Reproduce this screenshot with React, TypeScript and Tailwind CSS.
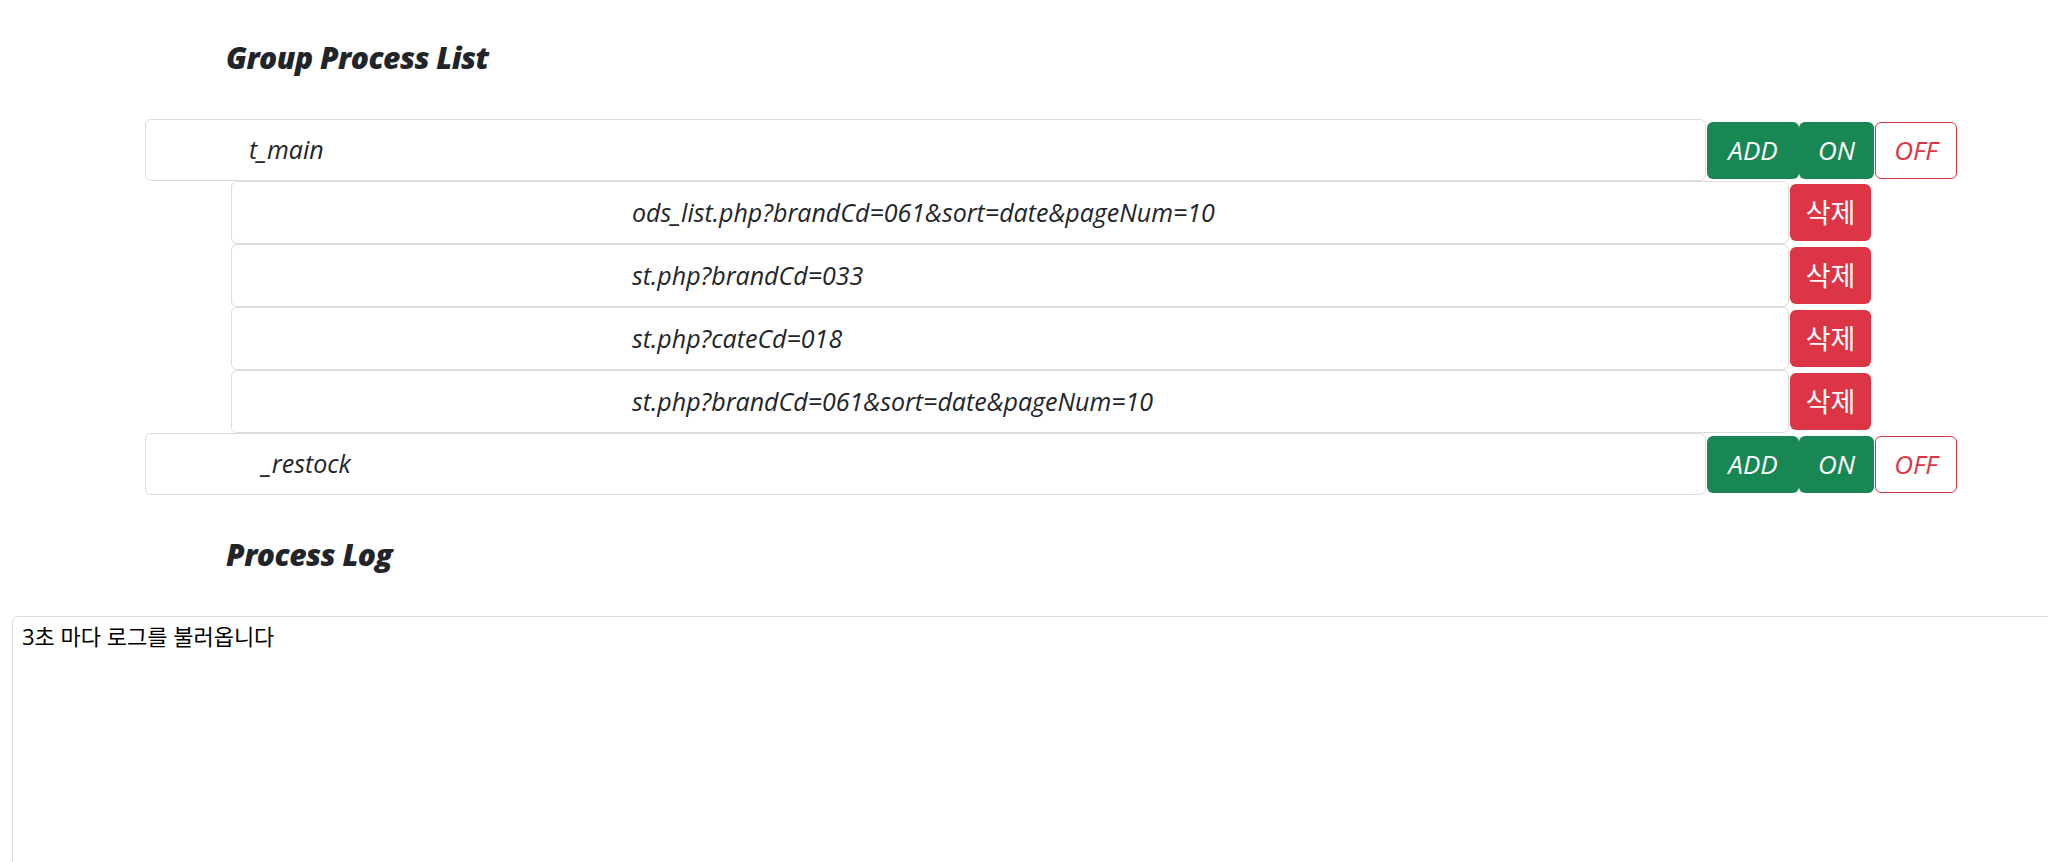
import React from "react";

const groups = [
  {
    name: "t_main",
    pad: "pl-[103px]",
    items: [
      "ods_list.php?brandCd=061&sort=date&pageNum=10",
      "st.php?brandCd=033",
      "st.php?cateCd=018",
      "st.php?brandCd=061&sort=date&pageNum=10",
    ],
  },
  { name: "_restock", pad: "pl-[116px]", items: [] as string[] },
];

function GroupRow({ name, pad }: { name: string; pad: string }) {
  return (
    <div className="flex items-center">
      <div className={`w-[1561px] h-[62px] flex items-center ${pad} border border-[#dcdcdc] rounded-[6px] bg-white text-[25px] italic text-[#212529]`}>
        {name}
      </div>
      <button className="ml-[1px] w-[92px] h-[57px] rounded-[6px] bg-[#198754] text-white text-[26px] italic">
        ADD
      </button>
      <button className="w-[75px] h-[57px] rounded-[6px] bg-[#198754] text-white text-[26px] italic">
        ON
      </button>
      <button className="ml-[1px] w-[82px] h-[57px] rounded-[6px] border border-[#dc3545] bg-white text-[#dc3545] text-[26px] italic">
        OFF
      </button>
    </div>
  );
}

function ItemRow({ url }: { url: string }) {
  return (
    <div className="flex items-center pl-[86px]">
      <div className="w-[1558px] h-[63px] flex items-center pl-[400px] border border-[#dcdcdc] rounded-[6px] bg-white text-[25px] italic text-[#212529]">
        {url}
      </div>
      <button className="ml-[1px] w-[81px] h-[57px] rounded-[6px] bg-[#dc3545] text-white text-[27px] font-['Noto_Sans_CJK_KR',sans-serif]">
        삭제
      </button>
    </div>
  );
}

export default function App() {
  return (
    <div className="w-[2048px] h-[862px] overflow-hidden bg-white font-['Open_Sans','Noto_Sans_CJK_KR',sans-serif] text-[#212529]">
      <h2 className="pl-[226px] pt-[40px] text-[30px] leading-[36px] font-extrabold italic tracking-[-0.5px]">
        Group Process List
      </h2>
      <div className="mt-[43px] pl-[145px] flex flex-col">
        {groups.map((g) => (
          <React.Fragment key={g.name}>
            <GroupRow name={g.name} pad={g.pad} />
            {g.items.map((u) => (
              <ItemRow key={u} url={u} />
            ))}
          </React.Fragment>
        ))}
      </div>
      <h2 className="pl-[226px] pt-[42px] text-[30px] leading-[36px] font-extrabold italic tracking-[-0.5px]">
        Process Log
      </h2>
      <div className="mt-[43px] pl-[12px]">
        <textarea
          readOnly
          className="block w-[2100px] h-[300px] border border-[#dcdcdc] rounded-[6px] px-[9px] pt-[4px] text-[22px] leading-[30px] text-black resize-none outline-none font-['Open_Sans','Noto_Sans_CJK_KR',sans-serif]"
          defaultValue="3초 마다 로그를 불러옵니다"
        />
      </div>
    </div>
  );
}
